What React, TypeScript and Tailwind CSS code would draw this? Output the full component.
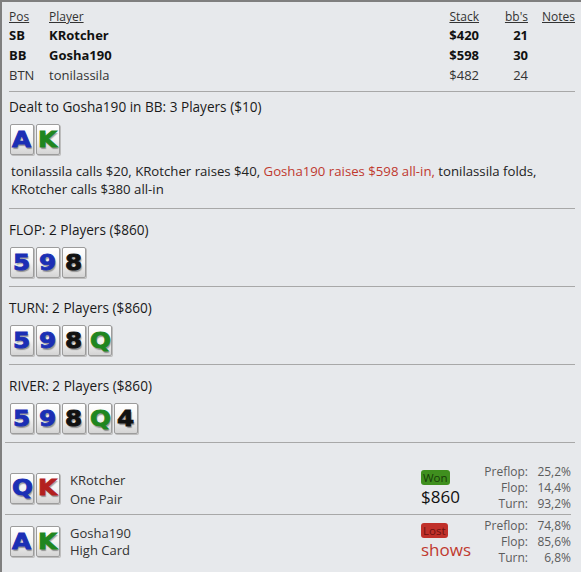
import React from "react";

type Suit = "b" | "g" | "k" | "r";

const suitColor: Record<Suit, string> = {
  b: "text-[#1b2fb5]",
  g: "text-[#1f861f]",
  k: "text-[#111111]",
  r: "text-[#b3201f]",
};

const Card = ({ rank, suit }: { rank: string; suit: Suit }) => (
  <div className="flex h-[31px] w-[24px] items-center justify-center overflow-hidden rounded-[2px] border border-[#9c9c9c] bg-linear-to-b from-white via-[#f4f4f4] to-[#d4d4d4] shadow-[1px_1px_0_#bdbdbd]">
    <span
      className={`${suitColor[suit]} inline-block scale-x-[1.12] font-['DejaVu_Sans',sans-serif] text-[22px] leading-none font-black [-webkit-text-stroke:0.9px_currentColor] [text-shadow:1px_1.5px_1px_rgba(0,0,0,0.35)]`}
    >
      {rank}
    </span>
  </div>
);

const Hand = ({ cards }: { cards: [string, Suit][] }) => (
  <div className="flex gap-[2px]">
    {cards.map(([r, s], i) => (
      <Card key={i} rank={r} suit={s} />
    ))}
  </div>
);

const players = [
  { pos: "SB", name: "KRotcher", stack: "$420", bb: "21", bold: true },
  { pos: "BB", name: "Gosha190", stack: "$598", bb: "30", bold: true },
  { pos: "BTN", name: "tonilassila", stack: "$482", bb: "24", bold: false },
];

const streets: { title: string; cards: [string, Suit][] }[] = [
  { title: "FLOP: 2 Players ($860)", cards: [["5", "b"], ["9", "b"], ["8", "k"]] },
  { title: "TURN: 2 Players ($860)", cards: [["5", "b"], ["9", "b"], ["8", "k"], ["Q", "g"]] },
  {
    title: "RIVER: 2 Players ($860)",
    cards: [["5", "b"], ["9", "b"], ["8", "k"], ["Q", "g"], ["4", "k"]],
  },
];

const Equity = ({ rows }: { rows: [string, string][] }) => (
  <div className="grid w-[93px] grid-cols-[50px_43px] text-[12px] leading-[16px] text-[#5c5c5c]">
    {rows.map(([k, v]) => (
      <React.Fragment key={k}>
        <span className="text-right">{k}</span>
        <span className="text-right">{v}</span>
      </React.Fragment>
    ))}
  </div>
);

export default function App() {
  return (
    <div className="h-[572px] w-[581px] overflow-hidden border-t-2 border-l-2 border-[#7f7f7f] bg-[#e7e9ec] font-['Open_Sans',sans-serif] text-[13px] text-[#222]">
      <div className="px-[7px] pr-[6px]">
        <div className="grid grid-cols-[40px_1fr_60px_49px_47px] pt-[6px] text-[12px] leading-[17px] text-[#333]">
          <span className="underline">Pos</span>
          <span className="underline">Player</span>
          <span className="text-right underline">Stack</span>
          <span className="text-right underline">bb's</span>
          <span className="text-right underline">Notes</span>
        </div>
        {players.map((p) => (
          <div
            key={p.pos}
            className={`grid grid-cols-[40px_1fr_60px_49px_47px] text-[13px] leading-[20px] ${p.bold ? "font-bold text-[#111]" : "text-[#333]"}`}
          >
            <span>{p.pos}</span>
            <span>{p.name}</span>
            <span className="text-right">{p.stack}</span>
            <span className="text-right">{p.bb}</span>
            <span />
          </div>
        ))}

        <div className="mt-[6px] border-t border-[#a8a8a8] pt-[6px] pb-[10px]">
          <div className="text-[13.6px] leading-[18px] text-[#1a1a1a]">
            Dealt to Gosha190 in BB: 3 Players ($10)
          </div>
          <div className="mt-[8px] ml-[1px]">
            <Hand cards={[["A", "b"], ["K", "g"]]} />
          </div>
          <div className="mt-[7px] ml-[2px] text-[13.2px] leading-[18px]">
            tonilassila calls $20, KRotcher raises $40,{" "}
            <span className="text-[#c0392f]">Gosha190 raises $598 all-in,</span> tonilassila folds,
            <br />
            KRotcher calls $380 all-in
          </div>
        </div>

        {streets.map((s) => (
          <div key={s.title} className="h-[78px] border-t border-[#a8a8a8] pt-[12px]">
            <div className="text-[13.6px] leading-[18px] text-[#1a1a1a]">{s.title}</div>
            <div className="mt-[8px] ml-[1px]">
              <Hand cards={s.cards} />
            </div>
          </div>
        ))}
      </div>

      <div className="ml-[3px] mr-[6px] border-t border-[#a8a8a8] pr-[4px]">
        <div className="flex h-[71px] items-center pt-[19px] pl-[5px]">
          <Hand cards={[["Q", "b"], ["K", "r"]]} />
          <div className="ml-[10px] flex-1 pt-[4px] leading-[19px] text-[#333]">
            <div>KRotcher</div>
            <div>One Pair</div>
          </div>
          <div className="flex w-[57px] flex-col items-start gap-[2px]">
            <span className="rounded-[3px] bg-[#3f8f1e] px-[2px] text-[11.5px] leading-[15px] text-[#173d08]">
              Won
            </span>
            <span className="text-[17px] leading-[20px] text-[#111]">$860</span>
          </div>
          <Equity
            rows={[
              ["Preflop:", "25,2%"],
              ["Flop:", "14,4%"],
              ["Turn:", "93,2%"],
            ]}
          />
        </div>
        <div className="flex h-[54px] items-center border-t border-[#a8a8a8] pl-[5px]">
          <Hand cards={[["A", "b"], ["K", "g"]]} />
          <div className="ml-[10px] flex-1 leading-[17px] text-[#333]">
            <div>Gosha190</div>
            <div>High Card</div>
          </div>
          <div className="flex w-[57px] flex-col items-start gap-[2px]">
            <span className="rounded-[3px] bg-[#c0302a] px-[2px] text-[11.5px] leading-[15px] text-[#6d1210]">
              Lost
            </span>
            <span className="text-[17px] leading-[20px] text-[#c0392f]">shows</span>
          </div>
          <Equity
            rows={[
              ["Preflop:", "74,8%"],
              ["Flop:", "85,6%"],
              ["Turn:", "6,8%"],
            ]}
          />
        </div>
      </div>
    </div>
  );
}
